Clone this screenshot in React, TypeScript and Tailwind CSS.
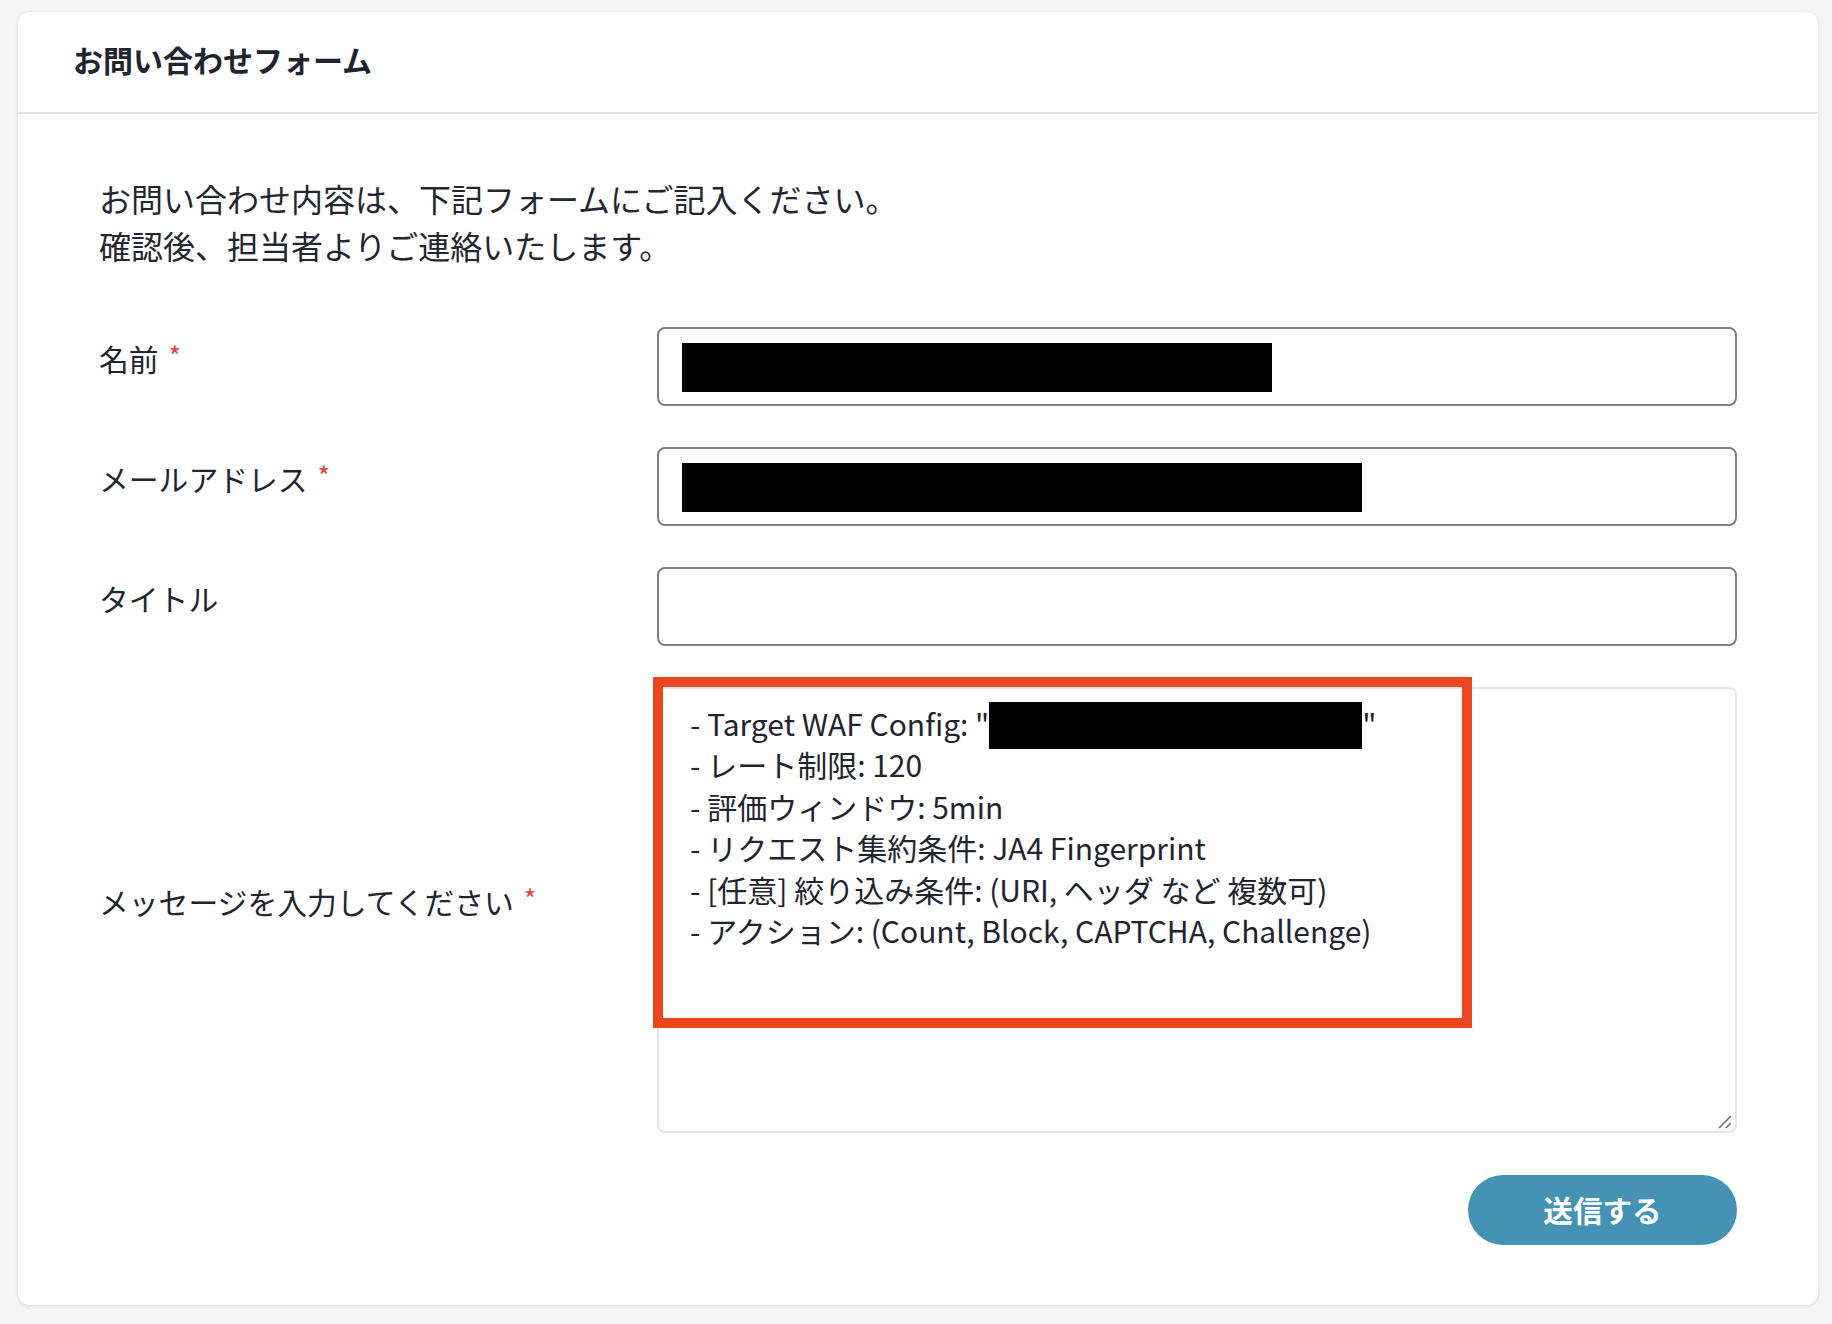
import React from 'react';

const Required = () => (
  <span className="ml-[10px] text-[27px] text-[#e0463a] align-top relative -top-[2px]">*</span>
);

function Field({ label, required, redact }: { label: string; required?: boolean; redact?: number }) {
  return (
    <div className="flex items-center">
      <div className="w-[558px] shrink-0 pb-[17px] text-[29.8px] leading-[40px] text-[#1f2430]">
        {label}
        {required && <Required />}
      </div>
      <div className="flex-1 h-[79px] border-2 border-[#808080] rounded-[8px] pl-[23px] pt-[14px]">
        {redact ? <div className="h-[49px] bg-black" style={{ width: redact }} /> : null}
      </div>
    </div>
  );
}

const messageLines = [
  'レート制限: 120',
  '評価ウィンドウ: 5min',
  'リクエスト集約条件: JA4 Fingerprint',
  '[任意] 絞り込み条件: (URI, ヘッダ など 複数可)',
  'アクション: (Count, Block, CAPTCHA, Challenge)',
];

export default function App() {
  return (
    <div className="min-h-screen bg-[#f5f5f5] pt-[12px] pb-[19px] pl-[18px] pr-[14px] font-['Noto_Sans_CJK_JP','Noto_Sans',sans-serif]">
      <div className="bg-white rounded-[12px] shadow-[0_1px_4px_rgba(0,0,0,0.12)]">
        <div className="h-[102px] flex items-center px-[55px] pb-[7px] border-b-2 border-[#e2e2e2]">
          <h1 className="text-[30px] font-bold text-[#1f2430] leading-none">お問い合わせフォーム</h1>
        </div>

        <div className="px-[81px] pt-[61px] pb-[60px]">
          <p className="text-[32px] leading-[47.4px] text-[#222631]">
            お問い合わせ内容は、下記フォームにご記入ください。
            <br />
            確認後、担当者よりご連絡いたします。
          </p>

          <div className="mt-[57px] flex flex-col gap-[41px]">
            <Field label="名前" required redact={590} />
            <Field label="メールアドレス" required redact={680} />
            <Field label="タイトル" />

            <div className="flex items-center">
              <div className="w-[558px] shrink-0 pb-[17px] text-[29.8px] leading-[40px] text-[#1f2430]">
                メッセージを入力してください
                <Required />
              </div>
              <div className="relative flex-1 h-[446px] border-2 border-[#e1e6ee] rounded-[8px] pl-[31px] pt-[14px] text-[30px] leading-[41.5px] text-[#1f2430]">
                <div>
                  - Target WAF Config: "
                  <span className="relative inline-block w-[373px] h-[41px] align-top">
                    <span className="absolute inset-x-0 -top-[1px] h-[47px] bg-black" />
                  </span>
                  "
                </div>
                {messageLines.map((line) => (
                  <div key={line}>- {line}</div>
                ))}
                <svg className="absolute right-[3px] bottom-[2px]" width="14" height="14" viewBox="0 0 14 14">
                  <path d="M1 13 L13 1 M8 13 L13 8" stroke="#6b6b6b" strokeWidth="1.5" fill="none" />
                </svg>
                <div className="absolute -left-[6px] -top-[12px] w-[819px] h-[351px] border-[10px] border-[#ed4520]" />
              </div>
            </div>
          </div>

          <div className="mt-[42px] flex justify-end">
            <button className="w-[269px] h-[70px] rounded-full bg-[#4493b5] text-white text-[29.6px] font-bold">
              送信する
            </button>
          </div>
        </div>
      </div>
    </div>
  );
}
